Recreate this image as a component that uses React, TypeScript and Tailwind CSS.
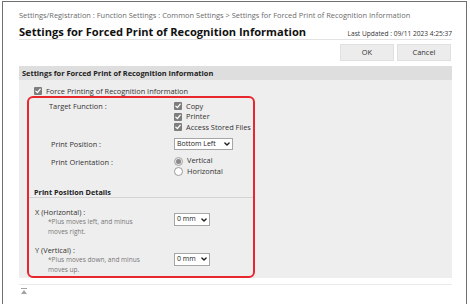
const Check = () => (
  <span className="w-[8px] h-[8px] shrink-0 rounded-[1px] bg-[#7d7d7d] flex items-center justify-center">
    <svg width="6" height="6" viewBox="0 0 6 6" fill="none">
      <path d="M0.8 3.1L2.4 4.6L5.2 1.2" stroke="white" strokeWidth="1.3" strokeLinecap="round" strokeLinejoin="round" />
    </svg>
  </span>
);

const Radio = ({ on }: { on?: boolean }) => (
  <span
    className={`w-[9px] h-[9px] shrink-0 rounded-full border flex items-center justify-center ${
      on ? "border-[#a8a8a8] bg-[#e4e4e4]" : "border-[#9a9a9a] bg-white"
    }`}
  >
    {on && <span className="w-[5px] h-[5px] rounded-full bg-[#8a8a8a]" />}
  </span>
);

const Select = ({ value, width, height }: { value: string; width: string; height: string }) => (
  <div className={`${width} ${height} bg-white border border-[#a6a6a6] flex items-center justify-between pl-[2px] pr-[2px] text-[7px] text-[#222]`}>
    <span>{value}</span>
    <svg width="6" height="4" viewBox="0 0 6 4" fill="none">
      <path d="M0.9 0.9L3 3L5.1 0.9" stroke="#222" strokeWidth="1.4" strokeLinecap="round" strokeLinejoin="round" />
    </svg>
  </div>
);

export default function App() {
  return (
    <div className="w-[470px] h-[304px] bg-white overflow-hidden pl-[2px] pt-[1px] pr-[3px] font-['Open_Sans',sans-serif]">
      <div className="h-[310px] border-l border-t border-r border-[#707070] pl-[16px] pr-[14px]">
        {/* Breadcrumb */}
        <div className="pt-[8px] leading-[10px] text-[7.45px] text-[#6b6b6b] whitespace-nowrap">
          Settings/Registration : Function Settings : Common Settings &gt; Settings for Forced Print of Recognition Information
        </div>

        {/* Title row */}
        <div className="mt-[5px] h-[15px] flex items-baseline justify-between border-b border-[#e2e2e2]">
          <h1 className="text-[11.1px] leading-[14px] font-bold text-[#111]">
            Settings for Forced Print of Recognition Information
          </h1>
          <span className="text-[6.6px] text-[#333]">Last Updated : 09/11 2023 4:25:37</span>
        </div>

        {/* Buttons */}
        <div className="mt-[4px] flex justify-end gap-[3px] pr-[1px]">
          <button className="w-[54px] h-[17px] bg-[#ececec] border border-[#e0e0e0] text-[7.4px] text-[#333]">OK</button>
          <button className="w-[54px] h-[17px] bg-[#ececec] border border-[#e0e0e0] text-[7.4px] text-[#333]">Cancel</button>
        </div>

        {/* Panel */}
        <div className="mt-[5px] bg-[#eeeeee]">
          <div className="h-[14px] leading-[14px] bg-[#dedede] pl-[3px] text-[7.4px] font-bold text-[#222]">
            Settings for Forced Print of Recognition Information
          </div>
          <div className="pt-[6px] h-[16px] pl-[15px] flex items-center gap-[4px] text-[7.4px] text-[#333]">
            <Check />
            <span className="leading-[10px]">Force Printing of Recognition Information</span>
          </div>

          {/* Highlighted block */}
          <div className="ml-[8px] w-[228px] mb-[-1px] border-2 border-[#e8262e] rounded-[6px] text-[7.4px] text-[#333]">
            <div className="pl-[20px] pt-[3px]">
              <div className="flex items-start">
                <div className="w-[125px] shrink-0 leading-[10.5px]">Target Function :</div>
                <div className="flex flex-col">
                  {["Copy", "Printer", "Access Stored Files"].map((t) => (
                    <div key={t} className="h-[10.5px] flex items-center gap-[4px]">
                      <Check />
                      <span>{t}</span>
                    </div>
                  ))}
                </div>
              </div>

              <div className="mt-[5.5px] flex items-center">
                <div className="w-[125px] shrink-0 pl-[2px] leading-[10px]">Print Position :</div>
                <Select value="Bottom Left" width="w-[59px]" height="h-[12px]" />
              </div>

              <div className="mt-[6px] flex items-start">
                <div className="w-[125px] shrink-0 pl-[2px] leading-[10px] pt-[1px]">Print Orientation :</div>
                <div className="flex flex-col">
                  <div className="h-[10px] flex items-center gap-[4px]">
                    <Radio on />
                    <span>Vertical</span>
                  </div>
                  <div className="h-[10.5px] flex items-center gap-[4px]">
                    <Radio />
                    <span>Horizontal</span>
                  </div>
                </div>
              </div>
            </div>

            <div className="mt-[10.5px] pl-[5px] leading-[10px] font-bold text-[7.3px] text-[#222] border-b border-[#d4d4d4]">
              Print Position Details
            </div>

            <div className="mt-[9px] flex items-start">
              <div className="w-[145px] shrink-0 leading-[10px]">
                <div className="pl-[6px]">X (Horizontal) :</div>
                <div className="pl-[19px] text-[6.5px] text-[#777]">*Plus moves left, and minus</div>
                <div className="pl-[19px] text-[6.5px] text-[#777]">moves right.</div>
              </div>
              <div className="mt-[6px]">
                <Select value="0 mm" width="w-[36px]" height="h-[13px]" />
              </div>
            </div>

            <div className="mt-[8px] pb-[1px] flex items-start">
              <div className="w-[145px] shrink-0">
                <div className="pl-[6px] leading-[10px]">Y (Vertical) :</div>
                <div className="pl-[19px] text-[6.5px] leading-[9.5px] text-[#777]">*Plus moves down, and minus</div>
                <div className="pl-[19px] text-[6.5px] leading-[10px] text-[#777]">moves up.</div>
              </div>
              <div className="mt-[7.5px]">
                <Select value="0 mm" width="w-[36px]" height="h-[13px]" />
              </div>
            </div>
          </div>
        </div>

        {/* Footer */}
        <div className="mt-[7px] h-px bg-[#eaeaea]" />
        <div className="mt-[3px] ml-[2px]">
          <svg width="6" height="6" viewBox="0 0 6 6">
            <rect x="0" y="0" width="6" height="1" fill="#a3a3a3" />
            <path d="M0 6L3 2L6 6Z" fill="#a3a3a3" />
          </svg>
        </div>
      </div>
    </div>
  );
}
